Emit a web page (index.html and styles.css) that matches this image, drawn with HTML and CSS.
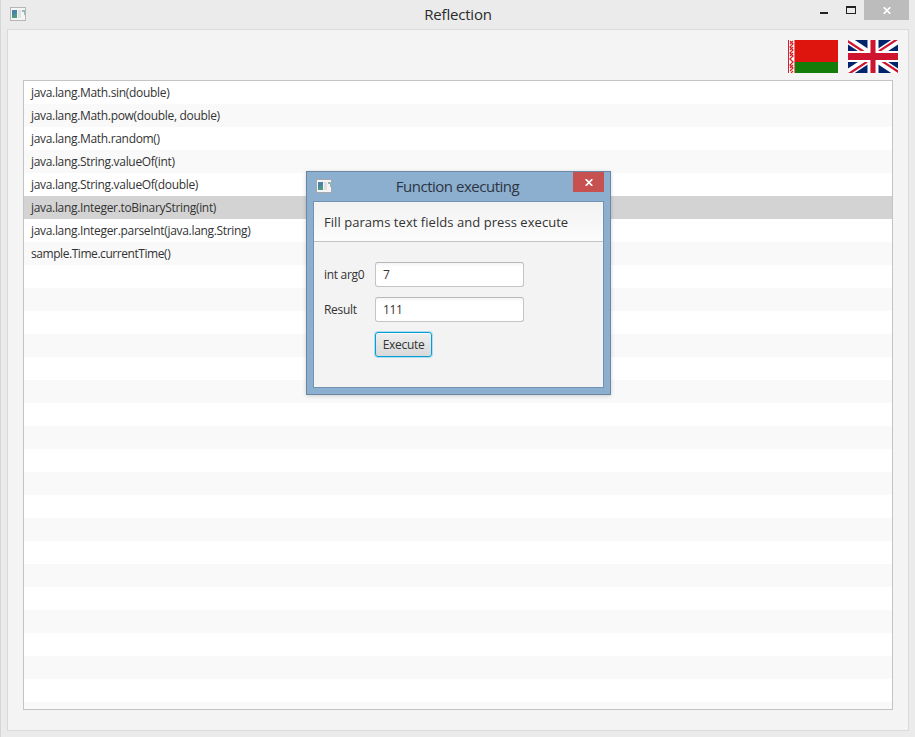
FILE: index.html
```html
<!DOCTYPE html>
<html lang="en">
<head>
<meta charset="utf-8">
<title>Reflection</title>
<link rel="stylesheet" href="styles.css">
</head>
<body>
<div class="window">
  <header class="titlebar">
    <svg class="app-icon" width="16" height="14" viewBox="0 0 16 14"><rect x=".5" y=".5" width="15" height="13" fill="#f5f5f5" stroke="#b4b6ba"/><rect x="2" y="3" width="5" height="8" fill="#4c9a86"/><path d="M2 3h5v3L2 9z" fill="#4a83a4"/><rect x="8" y="3" width="3" height="8" fill="#e1e1e4"/><path d="M12 3h3v5h-1V5h-2z" fill="#8dbdb5"/></svg>
    <h1 class="title">Reflection</h1>
    <div class="controls">
      <svg width="40" height="20" viewBox="0 0 40 20"><path d="M0 12h8v2H0z" fill="#222"/><path d="M26 6h10v8H26zM27 8v5h8V8z" fill="#222" fill-rule="evenodd"/></svg>
      <div class="close"><svg width="8" height="7" viewBox="0 0 8 7"><path d="M.7.2 7.3 6.8M7.3.2.7 6.8" stroke="#fff" stroke-width="1.7"/></svg></div>
    </div>
  </header>
  <main class="client">
    <div class="flags">
      <svg width="50" height="33" viewBox="0 0 50 33"><path fill="#de140e" d="M0 0h50v22H0z"/><path fill="#147c08" d="M7 22h43v11H7z"/><path fill="#fff" d="M1 0h5v33H1z"/><path fill="#e57a78" d="M6 0h1v33H6z"/><path d="M2 1 5 4 2 7 5 10 2 13 5 16 2 19 5 22 2 25 5 28 2 31M5 1 2 4M5 7 2 10M5 13 2 16M5 25 2 28M5 31 3 33" fill="none" stroke="#d8202a" stroke-width="1.3"/><path d="M.5 0v33" stroke="#d8202a"/></svg>
      <svg width="50" height="33" viewBox="0 0 50 33"><path fill="#00246b" d="M0 0h50v33H0z"/><path d="m0 0 50 33M50 0 0 33" stroke="#fff" stroke-width="7.5"/><path d="M0 0l25 16.5h-4L-4 0zM50 0 25 16.5h-4L46 0zM50 33 25 16.5h4L54 33zM0 33l25-16.5h4L4 33z" fill="#cf1430"/><path d="M25 0v33M0 16.5h50" stroke="#fff" stroke-width="11"/><path d="M25 0v33" stroke="#e68090" stroke-width="6"/><path d="M25 0v33" stroke="#cf1430" stroke-width="4"/><path d="M0 16.5h50" stroke="#cf1430" stroke-width="7"/></svg>
    </div>
    <ul class="list">
      <li><span>java.lang.Math.sin(double)</span></li>
      <li><span>java.lang.Math.pow(double, double)</span></li>
      <li><span>java.lang.Math.random()</span></li>
      <li><span>java.lang.String.valueOf(int)</span></li>
      <li><span>java.lang.String.valueOf(double)</span></li>
      <li class="selected"><span>java.lang.Integer.toBinaryString(int)</span></li>
      <li><span>java.lang.Integer.parseInt(java.lang.String)</span></li>
      <li class="last"><span>sample.Time.currentTime()</span></li>
    </ul>
  </main>
</div>
<section class="dialog">
  <header class="dialog-bar">
    <svg class="dialog-icon" width="16" height="14" viewBox="0 0 16 14"><rect x=".5" y=".5" width="15" height="13" fill="#f5f5f5" stroke="#a4a8b0"/><rect x="2" y="3" width="5" height="8" fill="#4c9a86"/><path d="M2 3h5v3L2 9z" fill="#4a83a4"/><rect x="8" y="3" width="3" height="8" fill="#e1e1e4"/><path d="M12 3h3v5h-1V5h-2z" fill="#8dbdb5"/></svg>
    <h2 class="dialog-title">Function executing</h2>
    <div class="dialog-close"><svg width="8" height="7" viewBox="0 0 8 7"><path d="M.7.2 7.3 6.8M7.3.2.7 6.8" stroke="#fff" stroke-width="1.7"/></svg></div>
  </header>
  <div class="dialog-body">
    <div class="dialog-head"><span>Fill params text fields and press execute</span></div>
    <div class="form">
      <label>int arg0</label><div class="field">7</div>
      <label>Result</label><div class="field">111</div>
      <div class="button">Execute</div>
    </div>
  </div>
</section>
</body>
</html>
```
FILE: styles.css
```css
* { box-sizing: border-box; }
body { margin: 0; width: 915px; height: 737px; overflow: hidden; font: 12px "Open Sans", "Noto Sans", sans-serif; color: #333; }
svg { display: block; }
.window { width: 915px; height: 737px; display: flex; flex-direction: column; background: #ebebeb; border-left: 1px solid #d6d6d6; padding: 0 6px 6px; }
.titlebar { height: 29px; display: grid; grid-template-columns: 100px 1fr 100px; }
.app-icon { margin: 7px 0 0 3px; }
.title { margin: 0; font-size: 15px; font-weight: 400; line-height: 29px; text-align: center; letter-spacing: -.2px; color: #2b2b2b; }
.controls { display: flex; justify-content: flex-end; gap: 4px; }
.close { width: 45px; height: 20px; background: #bcbcbc; display: flex; align-items: center; justify-content: center; }
.client { height: 702px; background: #f4f4f4; border: 1px solid #dadada; padding: 10px 15px 20px; }
.flags { display: flex; justify-content: flex-end; gap: 10px; height: 40px; margin-right: -5px; }
.list { margin: 0; padding: 0; list-style: none; height: 630px; border: 1px solid #c4c4c4; background: repeating-linear-gradient(#fff 0 23px, #f9f9f9 23px 46px); }
.list li { height: 23px; padding-left: 7px; line-height: 24px; letter-spacing: -.32px; white-space: nowrap; }
.list .last { letter-spacing: -.44px; }
.list .selected { background: #d3d3d3; }
.dialog { position: absolute; left: 306px; top: 171px; width: 305px; height: 224px; background: #8cafd0; border: 1px solid #6988a6; box-shadow: 0 1px 4px rgba(0,0,0,.18); padding: 0 6px; }
.dialog-bar { height: 29px; display: grid; grid-template-columns: 31px 1fr 31px; }
.dialog-icon { margin: 7px 0 0 3px; }
.dialog-title { margin: 0; padding-right: 2px; font-size: 15px; font-weight: 400; line-height: 29px; text-align: center; letter-spacing: -.48px; color: #2d3540; white-space: nowrap; }
.dialog-close { height: 20px; background: #c75050; display: flex; align-items: center; justify-content: center; }
.dialog-body { height: 187px; border: 1px solid #7093b4; background: #f3f3f3; }
.dialog-head { height: 40px; border-bottom: 1px solid #c3c3c3; background: linear-gradient(#f2f2f2, #fcfcfc); padding-left: 10px; font-size: 13px; letter-spacing: .05px; line-height: 40px; white-space: nowrap; }
.form { display: grid; grid-template-columns: 51px 149px; grid-template-rows: 25px 25px 26px; row-gap: 10px; padding: 20px 10px; line-height: 25px; letter-spacing: -.3px; }
.field { border: 1px solid #c4c4c4; border-top-color: #b8b8b8; border-radius: 3px; background: linear-gradient(#f5f5f5, #fff 4px); padding-left: 7px; line-height: 23px; }
.button { grid-column: 2; width: 57px; height: 25px; border: 1px solid #039ed3; border-radius: 3px; box-shadow: 0 0 0 1px #b0def0, inset 0 1px #f9f9f9; background: linear-gradient(#efefef, #d9d9d9); text-align: center; line-height: 24px; }
```
